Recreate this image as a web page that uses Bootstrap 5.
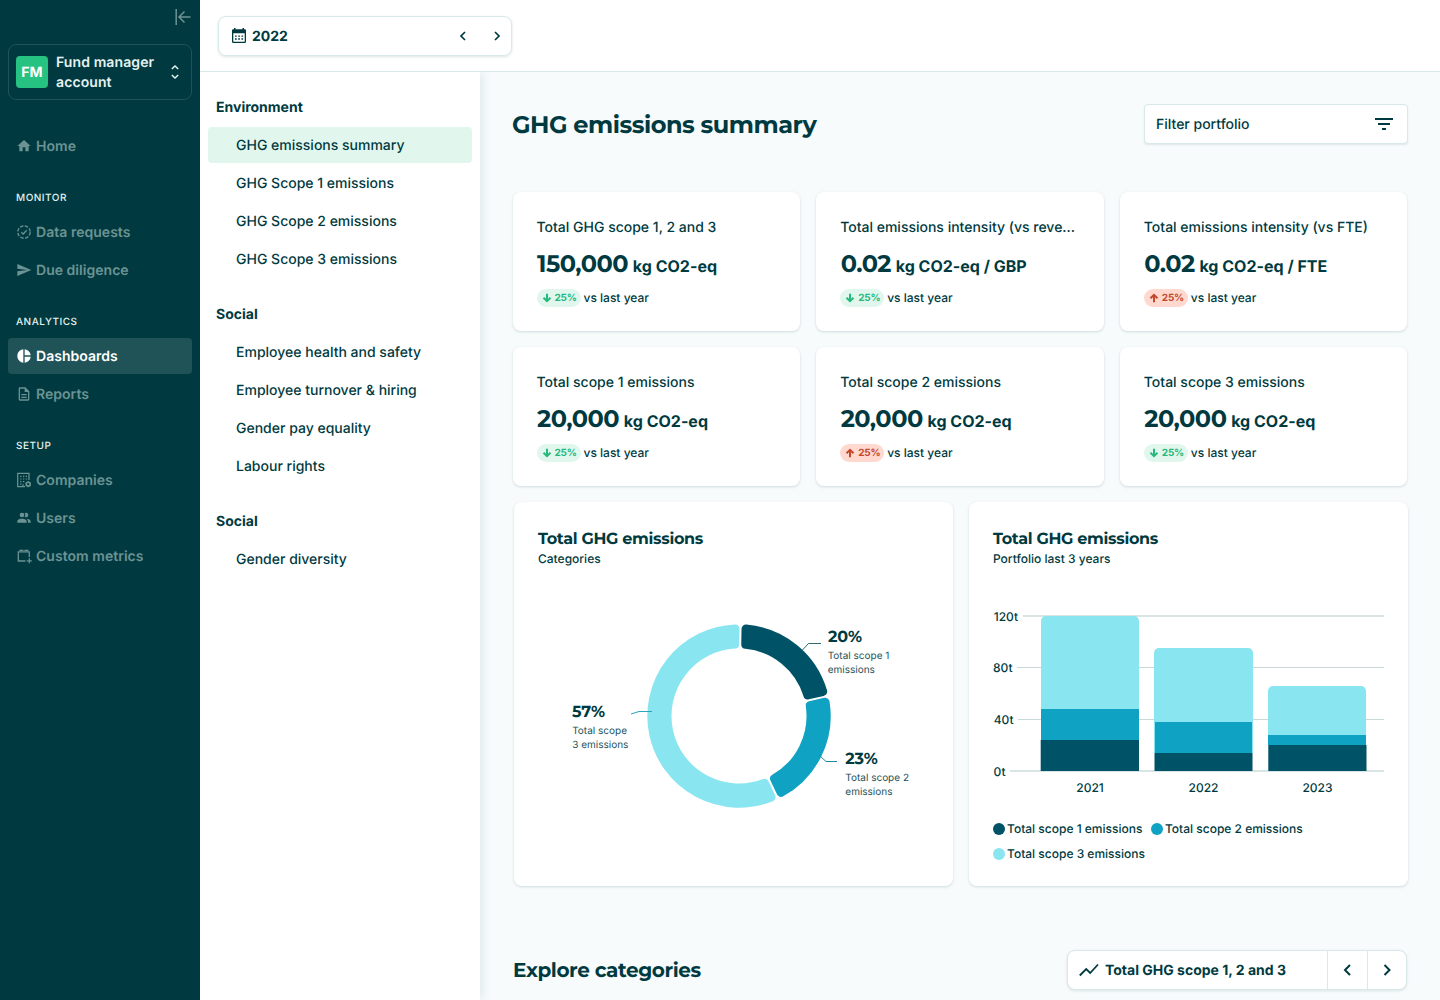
<!DOCTYPE html>
<html lang="en">
<head>
<meta charset="utf-8">
<meta name="viewport" content="width=device-width, initial-scale=1">
<title>GHG emissions summary</title>
<link href="https://cdn.jsdelivr.net/npm/bootstrap@5.3.0/dist/css/bootstrap.min.css" rel="stylesheet">
<style>
:root{--ink:#003a40;--line:#d9e8e8}
body{font-family:Inter,"Liberation Sans",sans-serif;font-size:14px;line-height:20px;color:var(--ink);font-weight:500;background:#fff;height:1000px;overflow:hidden;text-rendering:geometricPrecision}
svg{display:block;flex:none}
.side{width:200px;background:#003a40;padding:8px;flex:none}
.collapse-btn{height:18px;padding-right:1px}
.account{height:56px;margin-top:18px;border:1px solid #1f5357;border-radius:8px;padding:0 8px 0 7px;font-weight:600;color:#e5f2f1;letter-spacing:.1px}
.avatar-fm{width:32px;height:32px;border-radius:4px;background:#26c281;color:#fff;font-weight:700;padding-top:1px;letter-spacing:0}
.account-name,.year-value,.picker-name{padding-top:2px}
.side .nav-link{height:36px;padding:2px 8px 0;gap:4px;color:#6c9393;border-radius:4px;font-weight:600;letter-spacing:.03px}
.side .nav-link svg,.filter svg{margin-bottom:2px}
.side .nav-link.active{background:#1f5357;color:#fff}
.side .nav{gap:2px}
.side-label{font-size:10px;line-height:19px;color:#e5f2f1;letter-spacing:.5px;margin:25px 8px 6px}
.topbar{height:72px;border-bottom:1px solid var(--line);padding:16px 18px}
.year{width:294px;height:40px;border:1px solid var(--line);border-radius:8px;box-shadow:0 1px 3px rgba(0,58,64,.14);padding:0 6px 0 12px;font-weight:700}
.sub{width:280px;background:#fff;padding:26px 8px 0;box-shadow:2px 0 10px rgba(0,58,64,.10);clip-path:inset(0 -20px 0 0);flex:none;z-index:1}
.sub h2{font-size:14px;line-height:20px;font-weight:700;margin:0 8px 9px}
.sub .nav{gap:2px;margin-bottom:28px}
.sub .nav-link{height:36px;padding:9px 28px 7px;color:var(--ink);border-radius:4px;font-weight:500}
.sub .nav-link.active{background:#e1f7ee}
.main-area{background:#f7fbfc;padding:32px 32px 0 32px}
.geo{font-family:Montserrat,Inter,sans-serif;font-weight:700;letter-spacing:-.02em}
.title{font-size:24px;line-height:44px;margin:0}
.filter{width:264px;height:40px;border:1px solid var(--line);border-radius:4px;box-shadow:0 1px 2px rgba(0,58,64,.1);background:#fff;padding:2px 11px 0}
.kpis{display:grid;grid-template-columns:repeat(3,1fr);gap:16px;margin:44px .5px 0}
.panel{background:#fff;border-radius:8px;box-shadow:0 1px 3px rgba(0,58,64,.16)}
.kpi{height:139px;padding:26px 24px 0}
.kpi-val{font-size:24px;line-height:32px;margin:11px 0 0 .5px;white-space:nowrap}
.kpi-val span{font-family:Inter,sans-serif;font-size:16px;font-weight:700;margin-left:4.700px;letter-spacing:0}
.kpi-foot{font-size:12px;line-height:18px;margin-top:7px;gap:3px}
.delta{height:18px;border-radius:9px;background:#e1f7ee;color:#26b87c;font-size:10px;font-weight:700;padding:0 5px;gap:3px;width:44px;letter-spacing:-.2px}
.delta.up{background:#ffd9d0;color:#c4472b}
.charts{gap:16px;margin:16px 0 0 2px}
.chart-box{height:384px;padding:28px 24px 0;flex:1 1 0}
.chart-box h3{font-size:16px;line-height:20px;margin:0}
.chart-box p{font-size:12px;line-height:20px;margin:-1px 0 0}
.legend{font-size:12px;line-height:25px;column-gap:8.5px}
.legend i{width:12px;height:12px;border-radius:50%;margin-right:2px}
.explore{margin:64px 1px 0}
.explore h2{font-size:20px;line-height:42px;margin:0}
.picker{width:340px;height:40px;border:1px solid var(--line);border-radius:8px;background:#fff;box-shadow:0 1px 3px rgba(0,58,64,.12);font-weight:700}
.picker .step{width:40px;border-left:1px solid var(--line);height:100%}
.picker .step:last-child{width:39px}
svg text{font-family:Inter,sans-serif;fill:#003a40}
svg text.geo{font-family:Montserrat,Inter,sans-serif;letter-spacing:-.15px}
svg .notes text{fill:#1f5357}
</style>
</head>
<body>
<div class="d-flex h-100">
  <aside class="side">
    <div class="collapse-btn d-flex justify-content-end"><svg width="16" height="18" viewBox="0 0 16 18" fill="none" stroke="#6c9393" stroke-width="1.500"><path d="M1.200 1v16M15.500 9H4M9.500 3.500L4 9l5.500 5.500"/></svg></div>
    <div class="account d-flex align-items-center">
      <div class="avatar-fm d-flex align-items-center justify-content-center me-2">FM</div>
      <div class="account-name flex-grow-1">Fund manager<br>account</div>
      <svg width="16" height="16" viewBox="0 0 16 16" fill="none" stroke="#e5f2f1" stroke-width="1.500"><path d="M4.800 5L8 2l3.200 3M4.800 11L8 14l3.200-3"/></svg>
    </div>
    <nav class="nav flex-column flex-nowrap" style="margin-top:28px">
      <a class="nav-link d-flex align-items-center" href="#"><svg width="16" height="16" viewBox="0 0 24 24" fill="currentColor"><path d="M10 20v-6h4v6h5v-8h3L12 3 2 12h3v8z"/></svg>Home</a>
    </nav>
    <div class="side-label">MONITOR</div>
    <nav class="nav flex-column flex-nowrap">
      <a class="nav-link d-flex align-items-center" href="#"><svg width="16" height="16" viewBox="0 0 16 16" fill="none" stroke="currentColor" stroke-width="1.250"><circle cx="8" cy="8" r="6.200" stroke-dasharray="3.500 1.370"/><path d="M5.300 8.200l1.900 1.800 3.500-3.700"/></svg>Data requests</a>
      <a class="nav-link d-flex align-items-center" href="#"><svg width="16" height="16" viewBox="0 0 24 24" fill="currentColor"><path d="M2 21L23 12 2 3v7l15 2-15 2z"/></svg>Due diligence</a>
    </nav>
    <div class="side-label">ANALYTICS</div>
    <nav class="nav flex-column flex-nowrap">
      <a class="nav-link active d-flex align-items-center" href="#"><svg width="16" height="16" viewBox="0 0 24 24" fill="currentColor"><path d="M11 2v20C5.900 21.500 2 17.200 2 12S5.900 2.500 11 2m2 0v9h9c-.5-4.800-4.200-8.500-9-9m0 11v9c4.700-.5 8.500-4.200 9-9z"/></svg>Dashboards</a>
      <a class="nav-link d-flex align-items-center" href="#"><svg width="16" height="16" viewBox="0 0 24 24" fill="currentColor"><path d="M6 2a2 2 0 0 0-2 2v16a2 2 0 0 0 2 2h12a2 2 0 0 0 2-2V8l-6-6H6m0 2h7v5h5v11H6V4m2 8v2h8v-2H8m0 4v2h8v-2H8z"/></svg>Reports</a>
    </nav>
    <div class="side-label">SETUP</div>
    <nav class="nav flex-column flex-nowrap">
      <a class="nav-link d-flex align-items-center" href="#"><svg width="16" height="16" viewBox="0 0 16 16" fill="none" stroke="currentColor" stroke-width="1.200"><path d="M13 8V1.300H1.700v13.400H9M7 14.500v-2.300"/><path d="M4.200 4.400h7M4.200 7h7M4.200 9.600h4.500M4.200 12.200h1.300" stroke-dasharray="1.300 1.500"/><circle cx="12.200" cy="12.200" r="1.900" stroke-width="1.500"/><path d="M12.200 9.200v1M12.200 14.200v1M9.600 10.700l.9.500M13.900 13.200l.9.500M9.600 13.700l.9-.5M13.900 11.200l.9-.5"/></svg>Companies</a>
      <a class="nav-link d-flex align-items-center" href="#"><svg width="16" height="16" viewBox="0 0 24 24" fill="currentColor"><path d="M16 17v2H2v-2s0-4 7-4 7 4 7 4M12.500 7.500A3.500 3.500 0 1 0 9 11a3.500 3.500 0 0 0 3.500-3.500M15.940 13A5.320 5.320 0 0 1 18 17v2h4v-2s0-3.630-6.060-4M15 4a3.390 3.390 0 0 0-1.930.59 5 5 0 0 1 0 5.820A3.390 3.390 0 0 0 15 11a3.500 3.500 0 0 0 0-7z"/></svg>Users</a>
      <a class="nav-link d-flex align-items-center" href="#"><svg width="16" height="16" viewBox="0 0 16 16" fill="none" stroke="currentColor" stroke-width="1.300"><path d="M9.500 13H2.300V3.900h11v5M4 3V2.300h2.800V3M9 3V2.300h2.800V3"/><path d="M13.300 10.300v5M10.800 12.800h5"/></svg>Custom metrics</a>
    </nav>
  </aside>

  <div class="flex-grow-1 d-flex flex-column">
    <header class="topbar">
      <div class="year d-flex align-items-center">
        <svg width="16" height="16" viewBox="0 0 16 16"><path fill="#003a40" fill-rule="evenodd" d="M3 0h1.500v1.200h7V0H13v1.200h.7A1.300 1.300 0 0 1 15 2.500v11.200a1.300 1.300 0 0 1-1.300 1.300H2.300A1.300 1.300 0 0 1 1 13.700V2.500a1.300 1.300 0 0 1 1.300-1.300H3zM2.300 5.300v8.400h11.400V5.300z"/><path stroke="#003a40" stroke-width="1.300" stroke-dasharray="1.700 1.500" d="M4 8.100h8.200M4 11h8.200"/></svg>
        <span class="year-value flex-grow-1" style="margin-left:5px">2022</span>
        <svg width="16" height="16" viewBox="0 0 16 16" fill="none" stroke="#003a40" stroke-width="1.700"><path d="M10 4L6 8l4 4"/></svg>
        <svg style="margin-left:18px" width="16" height="16" viewBox="0 0 16 16" fill="none" stroke="#003a40" stroke-width="1.700"><path d="M6 4l4 4-4 4"/></svg>
      </div>
    </header>
    <div class="d-flex flex-grow-1" style="min-height:0">
      <aside class="sub">
        <h2>Environment</h2>
        <nav class="nav flex-column flex-nowrap">
          <a class="nav-link active" href="#">GHG emissions summary</a>
          <a class="nav-link" href="#">GHG Scope 1 emissions</a>
          <a class="nav-link" href="#">GHG Scope 2 emissions</a>
          <a class="nav-link" href="#">GHG Scope 3 emissions</a>
        </nav>
        <h2>Social</h2>
        <nav class="nav flex-column flex-nowrap">
          <a class="nav-link" href="#">Employee health and safety</a>
          <a class="nav-link" href="#">Employee turnover &amp; hiring</a>
          <a class="nav-link" href="#">Gender pay equality</a>
          <a class="nav-link" href="#">Labour rights</a>
        </nav>
        <h2>Social</h2>
        <nav class="nav flex-column flex-nowrap">
          <a class="nav-link" href="#">Gender diversity</a>
        </nav>
      </aside>
      <main class="main-area flex-grow-1">
        <div class="d-flex justify-content-between">
          <h1 class="title geo">GHG emissions summary</h1>
          <div class="filter d-flex align-items-center justify-content-between">Filter portfolio
            <svg width="24" height="24" viewBox="0 0 24 24" stroke="#003a40" stroke-width="2"><path d="M3 7h18M6 12h12M10 17h4"/></svg>
          </div>
        </div>
        <section class="kpis">
          <div class="panel kpi"><div class="kpi-name">Total GHG scope 1, 2 and 3</div><div class="kpi-val geo">150,000<span>kg CO2-eq</span></div><div class="kpi-foot d-flex"><div class="delta d-flex align-items-center"><svg width="10" height="10" viewBox="0 0 10 10" fill="none" stroke="currentColor" stroke-width="2"><path d="M5 .8v7M1.500 4.800L5 8.200l3.500-3.400"/></svg>25%</div>vs last year</div></div>
          <div class="panel kpi"><div class="kpi-name">Total emissions intensity (vs reve...</div><div class="kpi-val geo">0.02<span>kg CO2-eq / GBP</span></div><div class="kpi-foot d-flex"><div class="delta d-flex align-items-center"><svg width="10" height="10" viewBox="0 0 10 10" fill="none" stroke="currentColor" stroke-width="2"><path d="M5 .8v7M1.500 4.800L5 8.200l3.500-3.400"/></svg>25%</div>vs last year</div></div>
          <div class="panel kpi"><div class="kpi-name">Total emissions intensity (vs FTE)</div><div class="kpi-val geo">0.02<span>kg CO2-eq / FTE</span></div><div class="kpi-foot d-flex"><div class="delta up d-flex align-items-center"><svg width="10" height="10" viewBox="0 0 10 10" fill="none" stroke="currentColor" stroke-width="2"><path d="M5 9.200v-7M1.500 5.200L5 1.800l3.500 3.400"/></svg>25%</div>vs last year</div></div>
          <div class="panel kpi"><div class="kpi-name">Total scope 1 emissions</div><div class="kpi-val geo">20,000<span>kg CO2-eq</span></div><div class="kpi-foot d-flex"><div class="delta d-flex align-items-center"><svg width="10" height="10" viewBox="0 0 10 10" fill="none" stroke="currentColor" stroke-width="2"><path d="M5 .8v7M1.500 4.800L5 8.200l3.500-3.400"/></svg>25%</div>vs last year</div></div>
          <div class="panel kpi"><div class="kpi-name">Total scope 2 emissions</div><div class="kpi-val geo">20,000<span>kg CO2-eq</span></div><div class="kpi-foot d-flex"><div class="delta up d-flex align-items-center"><svg width="10" height="10" viewBox="0 0 10 10" fill="none" stroke="currentColor" stroke-width="2"><path d="M5 9.200v-7M1.500 5.200L5 1.800l3.500 3.400"/></svg>25%</div>vs last year</div></div>
          <div class="panel kpi"><div class="kpi-name">Total scope 3 emissions</div><div class="kpi-val geo">20,000<span>kg CO2-eq</span></div><div class="kpi-foot d-flex"><div class="delta d-flex align-items-center"><svg width="10" height="10" viewBox="0 0 10 10" fill="none" stroke="currentColor" stroke-width="2"><path d="M5 .8v7M1.500 4.800L5 8.200l3.500-3.400"/></svg>25%</div>vs last year</div></div>
        </section>
        <section class="charts d-flex">
          <div class="panel chart-box">
            <h3 class="geo">Total GHG emissions</h3>
            <p>Categories</p>
            <svg width="391" height="260" viewBox="0 0 391 260">
              <g id="donut"></g>
              <g fill="none" stroke-width="1"><path stroke="#2f6a6a" d="M263.500 82l7-7.500h12.500"/><path stroke="#1b8aa5" d="M281 186l7 6.500h11"/><path stroke="#2aa5c0" d="M93 145l8-2.500h13"/></g>
              <g font-size="16" font-weight="700"><text class="geo" x="290" y="73">20%</text><text class="geo" x="307.300" y="195">23%</text><text class="geo" x="34" y="148">57%</text></g>
              <g font-size="10" font-weight="400" class="notes"><text x="289.700" y="90">Total scope 1</text><text x="289.700" y="104">emissions</text><text x="307.300" y="211.600">Total scope 2</text><text x="307.300" y="225.600">emissions</text><text x="34.200" y="165">Total scope</text><text x="34.200" y="179">3 emissions</text></g>
            </svg>
          </div>
          <div class="panel chart-box">
            <h3 class="geo">Total GHG emissions</h3>
            <p>Portfolio last 3 years</p>
            <svg width="391" height="247" viewBox="0 0 391 247">
              <g stroke="#d9e5e5"><path stroke-width="2" d="M30 47h361M17 202h374"/><path stroke="#c9d9d9" d="M24 98.500h367M25 150.500h366"/></g>
              <g fill="#89e6f0"><path d="M48 140V52a5 5 0 0 1 5-5h88a5 5 0 0 1 5 5v88z"/><path d="M161 184V84a5 5 0 0 1 5-5h89a5 5 0 0 1 5 5v100z"/><path d="M275 166v-44a5 5 0 0 1 5-5h88a5 5 0 0 1 5 5v44z"/></g>
              <g fill="#0fa2c3"><path d="M48 140h98v31H48zM162 153h97v31h-97zM275 166h98v10h-98z"/></g>
              <g fill="#005266"><path d="M47.700 171H146v31H47.700zM161.500 184h98v18h-98zM275.300 176h98.200v26h-98.200z"/></g>
              <g font-size="12" font-weight="500"><text x=".7" y="51.500">120t</text><text x="0" y="103">80t</text><text x=".7" y="155">40t</text><text x=".5" y="206.500">0t</text>
              <g text-anchor="middle"><text x="97" y="223">2021</text><text x="210.500" y="223">2022</text><text x="324.500" y="223">2023</text></g></g>
            </svg>
            <div class="legend d-flex flex-wrap">
              <span class="d-flex align-items-center"><i style="background:#005266"></i>Total scope 1 emissions</span>
              <span class="d-flex align-items-center"><i style="background:#0fa2c3"></i>Total scope 2 emissions</span>
              <span class="d-flex align-items-center"><i style="background:#89e6f0"></i>Total scope 3 emissions</span>
            </div>
          </div>
        </section>
        <div class="explore d-flex justify-content-between">
          <h2 class="geo">Explore categories</h2>
          <div class="picker d-flex align-items-center">
            <svg style="margin:0 6px 0 11px" width="20" height="20" viewBox="0 0 20 20" fill="none" stroke="#003a40" stroke-width="1.800"><path d="M.8 15.500L7.200 9l4 4L19 4.500"/></svg>
            <span class="picker-name flex-grow-1">Total GHG scope 1, 2 and 3</span>
            <div class="step d-flex align-items-center justify-content-center"><svg width="16" height="16" viewBox="0 0 16 16" fill="none" stroke="#003a40" stroke-width="2"><path d="M10 3L5 8l5 5"/></svg></div>
            <div class="step d-flex align-items-center justify-content-center"><svg width="16" height="16" viewBox="0 0 16 16" fill="none" stroke="#003a40" stroke-width="2"><path d="M5.500 3l5 5-5 5"/></svg></div>
          </div>
        </div>
      </main>
    </div>
  </div>
</div>
<script src="https://cdn.jsdelivr.net/npm/bootstrap@5.3.0/dist/js/bootstrap.bundle.min.js"></script>
<script>
// Ring segments with rounded corners: each is inset by the corner radius, then stroked with round joins.
(function () {
  var cx = 201, cy = 147, R = 91.7, r = 67.5, rc = 4.5, half = 1;
  var parts = [[1, 77.3, '#005266'], [77.3, 154.8, '#0fa2c3'], [154.8, 361, '#89e6f0']];
  function pt(rad, a) { return (cx + rad * Math.sin(a)).toFixed(2) + ' ' + (cy - rad * Math.cos(a)).toFixed(2); }
  document.getElementById('donut').innerHTML = parts.map(function (p) {
    var a = p[0] * Math.PI / 180, b = p[1] * Math.PI / 180, o = R - rc, i = r + rc;
    var io = Math.asin((half + rc) / o), ii = Math.asin((half + rc) / i), big = b - a > Math.PI ? 1 : 0;
    return '<path fill="' + p[2] + '" stroke="' + p[2] + '" stroke-width="' + 2 * rc + '" stroke-linejoin="round" d="M' + pt(o, a + io) +
      'A' + o + ' ' + o + ' 0 ' + big + ' 1 ' + pt(o, b - io) + 'L' + pt(i, b - ii) +
      'A' + i + ' ' + i + ' 0 ' + big + ' 0 ' + pt(i, a + ii) + 'Z"/>';
  }).join('');
})();
</script>
</body>
</html>
